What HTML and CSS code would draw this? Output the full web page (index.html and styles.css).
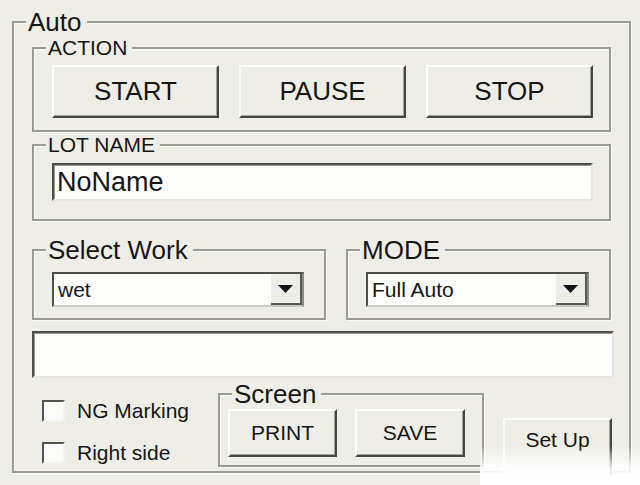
FILE: index.html
```html
<!DOCTYPE html>
<html>
    <head>
        <title>Auto</title>
        <link rel="stylesheet" href="styles.css">
    </head>
    <body>
        <fieldset class="group outer">
            <legend class="cap-big">Auto</legend>
            <div class="outer-body">

                <fieldset class="group action">
                    <legend class="cap-small">ACTION</legend>
                    <div class="action-row">
                        <button class="btn big">START</button>
                        <button class="btn big">PAUSE</button>
                        <button class="btn big">STOP</button>
                    </div>
                </fieldset>

                <fieldset class="group lot">
                    <legend class="cap-small">LOT NAME</legend>
                    <input type="text" class="field lot-field" value="NoName"/>
                </fieldset>

                <div class="select-row">
                    <fieldset class="group work">
                        <legend class="cap-big">Select Work</legend>
                        <div class="combo work-combo">
                            <span class="combo-text">wet</span>
                            <span class="drop"><svg width="15" height="8" viewBox="0 0 15 8"><path d="M0 0H15L7.5 8Z" fill="#111"/></svg></span>
                        </div>
                    </fieldset>
                    <fieldset class="group mode">
                        <legend class="cap-big">MODE</legend>
                        <div class="combo mode-combo">
                            <span class="combo-text">Full Auto</span>
                            <span class="drop"><svg width="15" height="8" viewBox="0 0 15 8"><path d="M0 0H15L7.5 8Z" fill="#111"/></svg></span>
                        </div>
                    </fieldset>
                </div>

                <input type="text" class="field message" value=""/>

                <div class="bottom-row">
                    <div class="checks">
                        <label class="check"><span class="box"></span>NG Marking</label>
                        <label class="check"><span class="box"></span>Right side</label>
                    </div>
                    <fieldset class="group screen">
                        <legend class="cap-big">Screen</legend>
                        <div class="screen-row">
                            <button class="btn mid">PRINT</button>
                            <button class="btn mid save">SAVE</button>
                        </div>
                    </fieldset>
                    <button class="btn mid setup">Set Up</button>
                </div>

            </div>
        </fieldset>
        <div class="fade"></div>
    </body>
</html>
```

FILE: styles.css
```css
body{
    margin: 0;
    width: 640px;
    height: 485px;
    overflow: hidden;
    position: relative;
    background-color: #efeee6;
    font-family: "Liberation Sans", Arial, sans-serif;
    color: #161616;
}
*{
    box-sizing: border-box;
}

/* etched group boxes */
.group{
    margin: 0;
    padding: 0;
    min-width: 0;
    border: 2px solid #9c9b93;
    box-shadow: inset 1px 1px 0 #fbfbf7, 1px 1px 0 #fbfbf7;
}
legend{
    margin-left: 12px;
    padding: 0 5px 0 2px;
    background-color: #efeee6;
}
.cap-big{
    font-size: 26px;
    line-height: 24px;
}
.cap-small{
    font-size: 21px;
    line-height: 20px;
}

.outer{
    margin: 10px 0 0 12px;
    width: 619px;
    height: 463px;
    overflow: visible;
}
.outer-body{
    padding: 0 0 0 18px;
}

.action{
    margin-top: 4px;
    width: 579px;
}
.action-row{
    display: grid;
    grid-template-columns: 167px 167px 167px;
    column-gap: 20px;
    padding: 7px 0 12px 18px;
}

.lot{
    margin-top: 3px;
    width: 579px;
    padding-bottom: 18px;
}

/* buttons */
.btn{
    font-family: "Liberation Sans", Arial, sans-serif;
    color: #161616;
    background-color: #efeee6;
    padding: 0;
    border: 2px solid;
    border-color: #fdfdfa #454541 #454541 #fdfdfa;
    box-shadow: inset -1px -1px 0 #a3a29b;
}
.big{
    height: 53px;
    font-size: 26px;
}
.mid{
    width: 109px;
    height: 48px;
    font-size: 21px;
}

/* sunken fields */
.field{
    display: block;
    font-family: "Liberation Sans", Arial, sans-serif;
    color: #161616;
    background-color: #fdfdfc;
    border: 2px solid;
    border-color: #4e4e4a #e6e5de #e6e5de #4e4e4a;
    box-shadow: inset 1px 1px 0 #9a9992;
    outline: none;
}
.lot-field{
    margin: 8px 0 0 18px;
    width: 541px;
    height: 38px;
    padding: 0 0 0 3px;
    font-size: 27px;
}
.message{
    margin-top: 11px;
    width: 582px;
    height: 47px;
}

.select-row{
    display: flex;
    gap: 20px;
    margin-top: 17px;
}
.work{
    width: 294px;
    padding: 10px 0 11px 0;
}
.mode{
    width: 265px;
    padding: 10px 0 11px 0;
}
.combo{
    display: flex;
    align-items: center;
    justify-content: space-between;
    margin-left: 18px;
    height: 35px;
    background-color: #fdfdfc;
    border: 2px solid;
    border-color: #4e4e4a #8d8c86 #c9c8c1 #4e4e4a;
    font-size: 21px;
}
.work-combo{
    width: 252px;
}
.mode-combo{
    width: 223px;
}
.combo-text{
    padding-left: 4px;
}
.drop{
    display: flex;
    align-items: center;
    justify-content: center;
    width: 31px;
    height: 31px;
    background-color: #efeee6;
    border-right: 2px solid #5a5a55;
    border-bottom: 2px solid #5a5a55;
}

/* bottom area */
.bottom-row{
    display: flex;
    align-items: flex-start;
}
.checks{
    width: 186px;
    padding: 22px 0 0 10px;
    display: flex;
    flex-direction: column;
    gap: 20px;
}
.check{
    display: flex;
    align-items: center;
    gap: 12px;
    font-size: 21px;
    height: 22px;
}
.box{
    width: 23px;
    height: 22px;
    background-color: #fbfbf9;
    border: 2px solid;
    border-color: #55554f #f4f4ef #f4f4ef #55554f;
}
.screen{
    margin-top: 4px;
    width: 266px;
    padding: 3px 0 8px 0;
}
.screen-row{
    display: flex;
    gap: 18px;
    margin-left: 8px;
}
.save{
    width: 110px;
}
.setup{
    margin: 40px 0 0 19px;
    height: 70px;
    padding-bottom: 26px;
}

/* washed-out strip in the bottom right corner */
.fade{
    position: absolute;
    left: 480px;
    top: 446px;
    width: 160px;
    height: 39px;
    background: linear-gradient(to bottom, rgba(255, 255, 255, 0), rgba(255, 255, 255, 0.8) 50%, #fff 80%);
}
```
